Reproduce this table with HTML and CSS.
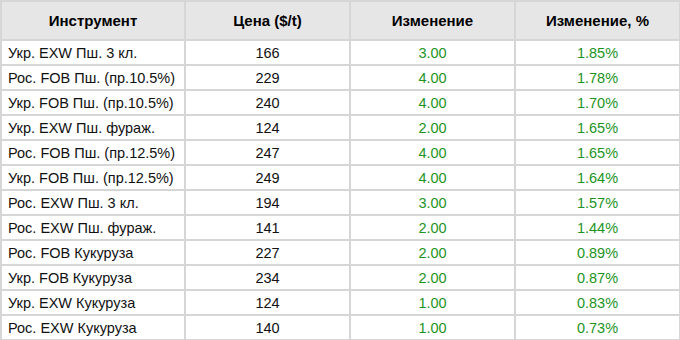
FILE: index.html
```html
<!DOCTYPE html>
<html>
<head>
<meta charset="utf-8">
<link rel="stylesheet" href="styles.css">
</head>
<body>
<table class="quotes">
  <colgroup>
    <col class="c-name"><col class="c-price"><col class="c-chg"><col class="c-pct">
  </colgroup>
  <thead>
    <tr><th>Инструмент</th><th>Цена ($/t)</th><th>Изменение</th><th>Изменение, %</th></tr>
  </thead>
  <tbody>
    <tr><td class="name">Укр. EXW Пш. 3 кл.</td><td>166</td><td class="up">3.00</td><td class="up">1.85%</td></tr>
    <tr><td class="name">Рос. FOB Пш. (пр.10.5%)</td><td>229</td><td class="up">4.00</td><td class="up">1.78%</td></tr>
    <tr><td class="name">Укр. FOB Пш. (пр.10.5%)</td><td>240</td><td class="up">4.00</td><td class="up">1.70%</td></tr>
    <tr><td class="name">Укр. EXW Пш. фураж.</td><td>124</td><td class="up">2.00</td><td class="up">1.65%</td></tr>
    <tr><td class="name">Рос. FOB Пш. (пр.12.5%)</td><td>247</td><td class="up">4.00</td><td class="up">1.65%</td></tr>
    <tr><td class="name">Укр. FOB Пш. (пр.12.5%)</td><td>249</td><td class="up">4.00</td><td class="up">1.64%</td></tr>
    <tr><td class="name">Рос. EXW Пш. 3 кл.</td><td>194</td><td class="up">3.00</td><td class="up">1.57%</td></tr>
    <tr><td class="name">Рос. EXW Пш. фураж.</td><td>141</td><td class="up">2.00</td><td class="up">1.44%</td></tr>
    <tr><td class="name">Рос. FOB Кукуруза</td><td>227</td><td class="up">2.00</td><td class="up">0.89%</td></tr>
    <tr><td class="name">Укр. FOB Кукуруза</td><td>234</td><td class="up">2.00</td><td class="up">0.87%</td></tr>
    <tr><td class="name">Укр. EXW Кукуруза</td><td>124</td><td class="up">1.00</td><td class="up">0.83%</td></tr>
    <tr><td class="name">Рос. EXW Кукуруза</td><td>140</td><td class="up">1.00</td><td class="up">0.73%</td></tr>
  </tbody>
</table>
</body>
</html>
```

FILE: styles.css
```css
html, body {
  margin: 0;
  padding: 0;
  background: #ffffff;
}
body {
  font-family: Arial, "Liberation Sans", sans-serif;
  font-size: 14.5px;
  color: #111111;
}
.quotes {
  border-collapse: collapse;
  width: 679px;
  table-layout: fixed;
}
.c-name { width: 184px; }
.c-price { width: 165px; }
.c-chg { width: 165px; }
.c-pct { width: 165px; }
.quotes th,
.quotes td {
  border: 2px solid #d6d6d6;
  padding: 0 6px;
  text-align: center;
  white-space: nowrap;
}
.quotes th {
  background: #e6e6e6;
  font-size: 15px;
  font-weight: bold;
  color: #000;
  height: 37px;
}
.quotes td {
  height: 23px;
}
.quotes td.name {
  text-align: left;
}
.quotes td.up {
  color: #1e941e;
}
```
